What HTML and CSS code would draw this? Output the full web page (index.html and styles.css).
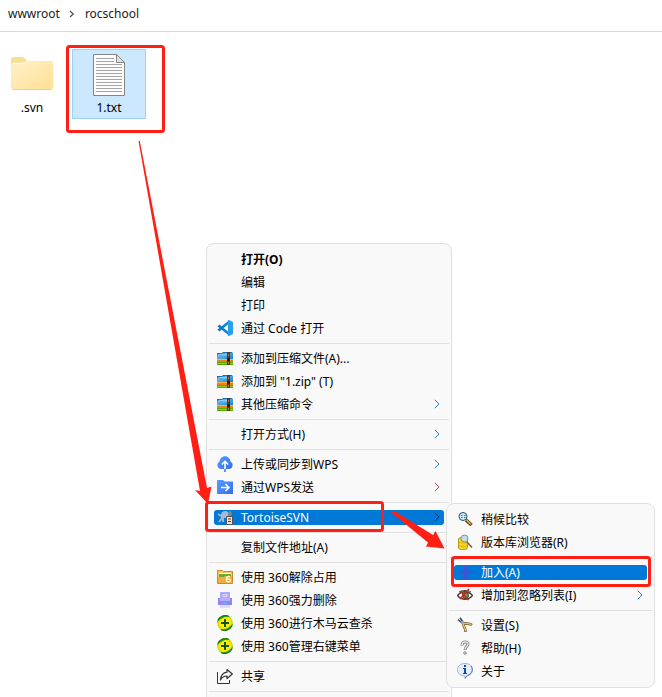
FILE: index.html
```html
<!DOCTYPE html>
<html lang="zh-CN">
<head>
  <meta charset="UTF-8">
  <meta name="viewport" content="width=device-width, initial-scale=1.0">
  <title>rocschool</title>
  <link rel="stylesheet" href="styles.css">
</head>
<body>
  <!-- Shared icons -->
  <svg class="sprite" aria-hidden="true">
    <defs>
      <linearGradient id="vsc" x1="0" x2="1"><stop offset="0" stop-color="#0072bc"/><stop offset="1" stop-color="#1a8fdc"/></linearGradient>
      <linearGradient id="zipBlue" x1="0" x2="1" y2="1"><stop offset="0" stop-color="#1668a8"/><stop offset=".4" stop-color="#5ab2ea"/><stop offset="1" stop-color="#1583cf"/></linearGradient>
      <linearGradient id="wps" x1="0" x2="1" y2="1"><stop offset="0" stop-color="#5a9dff"/><stop offset="1" stop-color="#2f6ff0"/></linearGradient>
      <radialGradient id="ball"><stop offset="0" stop-color="#fff200"/><stop offset=".7" stop-color="#ffe900"/><stop offset="1" stop-color="#b8d800"/></radialGradient>
      <linearGradient id="folder" x1="0" x2="1" y2="1"><stop offset="0" stop-color="#fff1c9"/><stop offset="1" stop-color="#ffe093"/></linearGradient>
    </defs>
    <symbol id="i-chevron" viewBox="0 0 6 10"><path d="M.8.8 5 5 .8 9.200" fill="none" stroke="currentColor"/></symbol>
    <symbol id="i-zip" viewBox="0 0 16 16">
      <path d="M0 4l1-1h4l1-1h9l1 1v6H0z" fill="url(#zipBlue)"/>
      <path d="M1 5.500C4 3 7 6 10 4.500" fill="none" stroke="#a6dcfb"/>
      <path d="M0 3.500h5l1-1h9" fill="none" stroke="#1e6fae"/>
      <path d="M0 9h16v3H0z" fill="#f0801a"/><path d="M0 9h16v1H0z" fill="#ffb04a"/>
      <path d="M0 12h16v3H0z" fill="#58a800"/><path d="M0 13h16v1H0z" fill="#8bd024"/>
      <path d="M10 2h3v13h-3z" fill="#6a3410"/><path d="M11 4h1v2h-1zm0 8h1v2h-1z" fill="#a87448"/><path d="M10 8h3v3h-3z" fill="#3a1c0c"/>
    </symbol>
    <symbol id="i-360" viewBox="0 0 16 16">
      <circle cx="8" cy="8" r="7.800" fill="url(#ball)"/>
      <path d="M.2 7.500A7.800 7.800 0 0 1 13 2C9 1 4 2.500.2 7.500zM15.800 8.500A7.800 7.800 0 0 1 3 14c4 1 9-.5 12.800-5.500z" fill="#2d9a18"/>
      <path d="M1 5C3 1.500 8-.5 12 1.300M15 11c-2 3.500-7 5.500-11 3.700" fill="none" stroke="#137018"/>
      <path d="M7 4h2v3h3v2H9v3H7V9H4V7h3z" fill="#125c18"/>
    </symbol>
  </svg>

  <div class="explorer">
    <nav class="breadcrumb">
      <a href="#">wwwroot</a>
      <svg class="crumb-arrow" viewBox="0 0 6 8"><path d="M1 1l3.200 3L1 7" fill="none" stroke="#555" stroke-width="1.300"/></svg>
      <a href="#">rocschool</a>
    </nav>

    <div class="files">
      <button class="file">
        <svg class="file-icon" viewBox="0 0 42 42">
          <path d="M0 6q0-3 3-3h8q2 0 3.500 2l1.500 2h23q3 0 3 3v5H0z" fill="#fbdd90"/>
          <path d="M0 12q0-2 2-2h10l4-3h23q3 0 3 3v23q0 3-3 3H3q-3 0-3-3z" fill="url(#folder)"/>
          <path d="M2 35.500h38" stroke="#f0cf80"/>
          <path d="M1.500 9.500H12l3.500-2" fill="none" stroke="#fffdf4" stroke-width="1.300"/>
        </svg>
        <span>.svn</span>
      </button>
      <button class="file selected">
        <svg class="file-icon" viewBox="0 0 42 42">
          <path d="M5.500.5h23l8 8v33h-31z" fill="#fcfcfc" stroke="#858585"/>
          <path d="M28.500.5v8h8z" fill="#dfe3e6" stroke="#858585"/>
          <path d="M8 4.500h18M8 7.500h18M8 10.500h26M8 13.500h26M8 16.500h26M8 19.500h26M8 22.500h26M8 25.500h26M8 28.500h26M8 31.500h26M8 34.500h26M8 37.500h26" stroke="#a6a6a6"/>
        </svg>
        <span>1.txt</span>
      </button>
    </div>

    <!-- Context menu -->
    <ul class="menu main-menu">
      <li><button class="item default"><span class="icon"></span>打开(O)</button></li>
      <li><button class="item"><span class="icon"></span>编辑</button></li>
      <li><button class="item"><span class="icon"></span>打印</button></li>
      <li><button class="item">
        <svg class="icon" viewBox="0 0 16 16"><path d="M1.500 5.500 12 14M1.500 10.500 12 2" fill="none" stroke="url(#vsc)" stroke-width="2.600"/><path d="M11 0h1l4 2v12l-4 2h-1z" fill="#27a0ec"/></svg>通过 Code 打开</button></li>
      <li class="separator"></li>
      <li><button class="item"><svg class="icon"><use href="#i-zip"/></svg>添加到压缩文件(A)...</button></li>
      <li><button class="item"><svg class="icon"><use href="#i-zip"/></svg>添加到 "1.zip" (T)</button></li>
      <li><button class="item"><svg class="icon"><use href="#i-zip"/></svg>其他压缩命令<svg class="more"><use href="#i-chevron"/></svg></button></li>
      <li class="separator"></li>
      <li><button class="item"><span class="icon"></span>打开方式(H)<svg class="more"><use href="#i-chevron"/></svg></button></li>
      <li class="separator"></li>
      <li><button class="item">
        <svg class="icon" viewBox="0 0 16 16"><path d="M4 13A4 4 0 0 1 2.500 5.500C3 2.500 5 .2 8 .2s5 2.300 5.500 5.300A4 4 0 0 1 12 13z" fill="url(#wps)"/><path d="M8 13V5.500M4.800 8.500 8 5.300l3.200 3.200" fill="none" stroke="#fff" stroke-width="1.600"/><path d="M8 13v3" stroke="#3478f4" stroke-width="1.600"/></svg>上传或同步到WPS<svg class="more"><use href="#i-chevron"/></svg></button></li>
      <li><button class="item">
        <svg class="icon" viewBox="0 0 16 16"><path d="M0 1h6l1.500 1.500H16V15H0z" fill="url(#wps)"/><path d="M4 8.500h7.500M8.500 5l3.500 3.500L8.500 12" fill="none" stroke="#fff" stroke-width="1.600"/></svg>通过WPS发送<svg class="more red"><use href="#i-chevron"/></svg></button></li>
      <li class="separator"></li>
      <li class="has-submenu">
        <button class="item active">
          <svg class="icon" viewBox="0 0 16 16"><path d="M1 5l3 2M2 13l3-4M6 13V9" stroke="#a9b2b6" stroke-width="2"/><path d="M4 9c-1-4 1-7 4-7s4 2 4 5l-2 2z" fill="#9db9ea"/><path d="M11 5l1-3h2l1 3-1 2h-3z" fill="#85857c"/><path d="M9.500 7.500h6v8h-6z" fill="#e5e5dc" stroke="#57534b"/><path d="M11 10h3M11 12.500h3" stroke="#3f3f3f"/></svg>TortoiseSVN<svg class="more"><use href="#i-chevron"/></svg></button>

        <ul class="menu submenu">
          <li><button class="item">
            <svg class="icon" viewBox="0 0 16 16"><path d="M9 9l5.500 5" stroke="#4b3516" stroke-width="3.400"/><path d="M9.500 9l4.500 4.300" stroke="#eab044" stroke-width="1.600"/><circle cx="6" cy="5.500" r="4" fill="#c9ebfa" stroke="#2b4a68"/><path d="M4 4.500h1.500M7 4.500h1.500M4 6.500h1.500M7 6.500h1.500" stroke="#2c7ba8"/></svg>稍候比较</button></li>
          <li><button class="item">
            <svg class="icon" viewBox="0 0 16 16"><path d="M1.500 5c0-2 9-2 9 0v9c0 2-9 2-9 0z" fill="#f7d51f" stroke="#b59a20"/><path d="M2 8c2 1.500 6 1.500 8 0M2 11.500c2 1.500 6 1.500 8 0" fill="none" stroke="#e0b400"/><path d="M10 8l5 5.500" stroke="#73613d" stroke-width="1.600"/><circle cx="7.500" cy="4.500" r="3.500" fill="#c5dce2" stroke="#7e929c"/></svg>版本库浏览器(R)</button></li>
          <li class="separator"></li>
          <li><button class="item active">
            <svg class="icon" viewBox="0 0 16 16"><path d="M7 2h3v5h5v3h-5v5H7v-5H2V7h5z" fill="#4055d5"/></svg>加入(A)</button></li>
          <li><button class="item">
            <svg class="icon" viewBox="0 0 16 16"><path d="M.5 8.500c4-5 11-5 15 0-4 5-11 5-15 0z" fill="#fff" stroke="#443d3a" stroke-width="1.300"/><circle cx="8.500" cy="8.500" r="3" fill="#5ca568" stroke="#203c2c"/><path d="M2 5c4-2 8-2 12 0" fill="none" stroke="#444"/><path d="M3.500 4l8 9M12 2 3 12" stroke="#d92217" stroke-width="1.700"/></svg>增加到忽略列表(I)<svg class="more"><use href="#i-chevron"/></svg></button></li>
          <li class="separator"></li>
          <li><button class="item">
            <svg class="icon" viewBox="0 0 16 16"><path d="M6 6c0 3 2.500 4 2.500 9M6 6c3 1.500 5-.5 9 2" fill="none" stroke="#705325" stroke-width="2.600"/><path d="M6 6c0 3 2.500 4 2.500 8.500M6 6c3 1.500 5-.5 8.500 1.800" fill="none" stroke="#e3bd76" stroke-width="1.400"/><path d="M.8 2.500 5 6M3 .8 6 5" stroke="#34435c" stroke-width="1.500"/><circle cx="5" cy="5" r="1.300" fill="#8fa2bd"/></svg>设置(S)</button></li>
          <li><button class="item">
            <svg class="icon" viewBox="0 0 16 16"><path d="M5 5.500c0-4.500 6-4.500 6-1.500 0 2.500-3 2.500-3 6" fill="none" stroke="#858585" stroke-width="3"/><path d="M5 5c0-4 6-4 6-1 0 2.500-3 2.500-3 5.500" fill="none" stroke="#eee" stroke-width="1.200"/><circle cx="8" cy="13" r="1.300" fill="#eee" stroke="#858585"/></svg>帮助(H)</button></li>
          <li><button class="item">
            <svg class="icon" viewBox="0 0 16 16"><path d="M8 .5c4.500 0 7.500 2.500 7.500 6.200 0 3-2 5.300-5 6L8 15.500V13C3.500 13 .5 10.300.5 6.700S3.500.5 8 .5z" fill="#e4effb" stroke="#9cb4d0"/><path d="M14 3c2.500 3.500 1 8-3.500 9.500L8 15" fill="none" stroke="#4f76a6"/><path d="M7 2h2v2H7zM6 5h3v5h1v1H6v-1h1V6H6z" fill="#1545b5"/></svg>关于</button></li>
        </ul>
      </li>
      <li class="separator"></li>
      <li><button class="item"><span class="icon"></span>复制文件地址(A)</button></li>
      <li class="separator"></li>
      <li><button class="item">
        <svg class="icon" viewBox="0 0 16 16"><path d="M.5 14.500V1.500h5l1 1h9v12z" fill="#f8c563" stroke="#cc8732"/><path d="M2 5h12v4H2z" fill="#68ad32"/><path d="M2 4h12v1H2z" fill="#fff"/><path d="M1 8h6l1-1h7v7H1z" fill="#f2ac42"/><path d="M13 7.500h-1.500q-2 0-2 2.500v1q0 2 2 2t2-1.500-2-1.500-2 1" fill="none" stroke="#fff6cf" stroke-width="1.300"/></svg>使用 360解除占用</button></li>
      <li><button class="item">
        <svg class="icon" viewBox="0 0 16 16"><path d="M3 0h10v8H3z" fill="#b0a7f8"/><path d="M6 2.500h4v2H6z" fill="none" stroke="#dcd8ff"/><path d="M1 6h2v2h10V6h2v7H1z" fill="#9186f5"/><path d="M3 6h10v3H3z" fill="#b7aefc"/><path d="M3 13h10v3H3z" fill="#d9defb"/><path d="M6 10.500h4v1.500H6z" fill="#44c9ec"/></svg>使用 360强力删除</button></li>
      <li><button class="item"><svg class="icon"><use href="#i-360"/></svg>使用 360进行木马云查杀</button></li>
      <li><button class="item"><svg class="icon"><use href="#i-360"/></svg>使用 360管理右键菜单</button></li>
      <li class="separator"></li>
      <li><button class="item">
        <svg class="icon" viewBox="0 0 16 16"><path d="M.5 4v11.500h12V12" fill="none" stroke="#333"/><path d="M10 1.500 15.300 6 10 10.500V8c-3 0-5 1-6.500 4C3.500 8 6 4.500 10 4.200z" fill="none" stroke="#333" stroke-width="1.200" stroke-linejoin="round"/></svg>共享</button></li>
      <li class="separator"></li>
    </ul>

    <!-- Red marks drawn over the windows -->
    <svg class="marks" aria-hidden="true">
      <g fill="none" stroke="#ff1f14" stroke-width="3">
        <rect x="67.500" y="46.500" width="96" height="85" rx="2"/>
        <rect x="206.500" y="502.500" width="176" height="28" rx="2"/>
        <rect x="452.500" y="557.500" width="197" height="28" rx="2"/>
      </g>
      <g fill="#ff1f14">
        <path d="M138.500 141h1.300L207 488l4.500-1.500L208 504l-13-14 5 1z"/>
        <path d="M389 511l7 1 37 23 2.500-4 9 17.500-18.500-2 2-4-33-27z"/>
      </g>
    </svg>
  </div>
</body>
</html>
```
FILE: styles.css
```css
* {
  box-sizing: border-box;
}

body {
  margin: 0;
  background: #fff;
  color: #000;
  font: 12px/16px "Noto Sans", "Noto Sans CJK SC", sans-serif;
}

button {
  border: 0;
  background: none;
  color: inherit;
  font: inherit;
}

.sprite {
  position: absolute;
  width: 0;
  height: 0;
}

.explorer {
  position: relative;
  height: 100vh;
  overflow: hidden;
}

.breadcrumb {
  display: flex;
  align-items: center;
  height: 32px;
  padding: 0 8px 4px;
  border-bottom: 1px solid #d9d9d9;
}

.breadcrumb a {
  color: #1a1a1a;
  text-decoration: none;
}

.crumb-arrow {
  width: 6px;
  height: 8px;
  margin: 0 10px 0 9px;
}

/* Files */
.files {
  display: flex;
  gap: 3px;
  margin-left: -5px;
  padding-top: 17px;
}

.file {
  display: flex;
  flex-direction: column;
  align-items: center;
  gap: 4px;
  width: 74px;
  height: 70px;
  padding: 4px 0 2px;
  border: 1px solid transparent;
}

.file.selected {
  background: #cce8ff;
  border-color: #99d1ff;
}

.file-icon {
  flex: none;
  width: 42px;
  height: 42px;
}

/* Menus */
.menu {
  position: absolute;
  margin: 0;
  padding: 4px 0;
  list-style: none;
  background: #f9f9f9;
  border: 1px solid #e0e0e0;
  border-radius: 8px;
}

.main-menu {
  top: 243px;
  left: 206px;
  width: 246px;
  padding-bottom: 24px;
}

.has-submenu {
  position: relative;
}

.submenu {
  top: -3px;
  left: calc(100% - 5px);
  width: 209px;
}

.menu > li {
  display: flex;
}

.item {
  display: flex;
  flex: 1;
  align-items: center;
  height: 15px;
  margin: 4px 7px;
  padding: 0 4px 0 3px;
  border-radius: 3px;
  text-align: left;
  white-space: nowrap;
}

.item.default {
  font-weight: bold;
}

.item.active {
  background: #0078d7;
  color: #fff;
}

.icon {
  flex: none;
  width: 16px;
  height: 16px;
  margin: -1px 8px 0 0;
}

.more {
  width: 6px;
  height: 10px;
  margin: -2px 0 0 auto;
  color: #2684b8;
}

.more.red {
  color: #c4484c;
}

.active .more {
  color: #06345e;
}

.menu > .separator {
  height: 1px;
  margin: 3px 2px;
  background: #e0e0e0;
}

.marks {
  position: absolute;
  top: 0;
  left: 0;
  width: 100%;
  height: 100%;
  pointer-events: none;
}
```
